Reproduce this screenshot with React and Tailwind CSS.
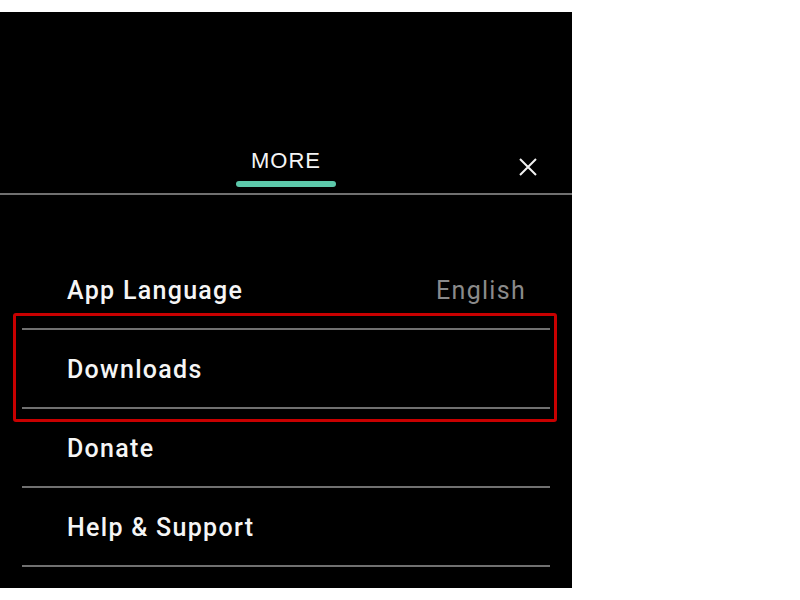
const items = [
  { label: 'App Language', value: 'English' },
  { label: 'Downloads' },
  { label: 'Donate' },
  { label: 'Help & Support' },
];

const CloseIcon = () => (
  <svg width="20" height="20" viewBox="0 0 20 20" fill="none" stroke="#f2f2f2" strokeWidth="2">
    <path d="M2 2 L18 18 M18 2 L2 18" />
  </svg>
);

export default function App() {
  return (
    <div className="w-[800px] h-[600px] bg-white pt-[12px]">
      <div className="relative w-[572px] h-[576px] bg-black font-['Roboto',sans-serif]">
        <div className="h-[183px] grid grid-cols-[1fr_auto_1fr] items-end border-b-2 border-[#707070]">
          <div />
          <div className="flex flex-col items-center">
            <span className="font-['Liberation_Sans',Arial,sans-serif] text-[22px] leading-[24px] tracking-[1px] text-[#f5f5f5]">MORE</span>
            <div className="mt-[8px] mb-[6px] w-[100px] h-[6px] rounded-full bg-[#5cc8aa]" />
          </div>
          <div className="flex justify-end pr-[34px] pb-[16px]">
            <CloseIcon />
          </div>
        </div>

        <div className="pt-[56px] px-[22px]">
          {items.map((item) => (
            <div key={item.label}>
              <div className="h-[77px] pt-[26px] pl-[45px] pr-[24px] flex items-start justify-between">
                <span className="text-[25px] leading-[28px] tracking-[1.3px] font-medium text-[#f5f5f5]">{item.label}</span>
                {item.value && (
                  <span className="text-[25px] leading-[28px] tracking-[1.3px] text-[#8a8a8a]">{item.value}</span>
                )}
              </div>
              <div className="h-[2px] bg-[#707070]" />
            </div>
          ))}
        </div>

        <div className="absolute left-[13px] top-[301px] w-[544px] h-[109px] border-[3px] border-[#c80000] rounded-[3px]" />
      </div>
    </div>
  );
}
